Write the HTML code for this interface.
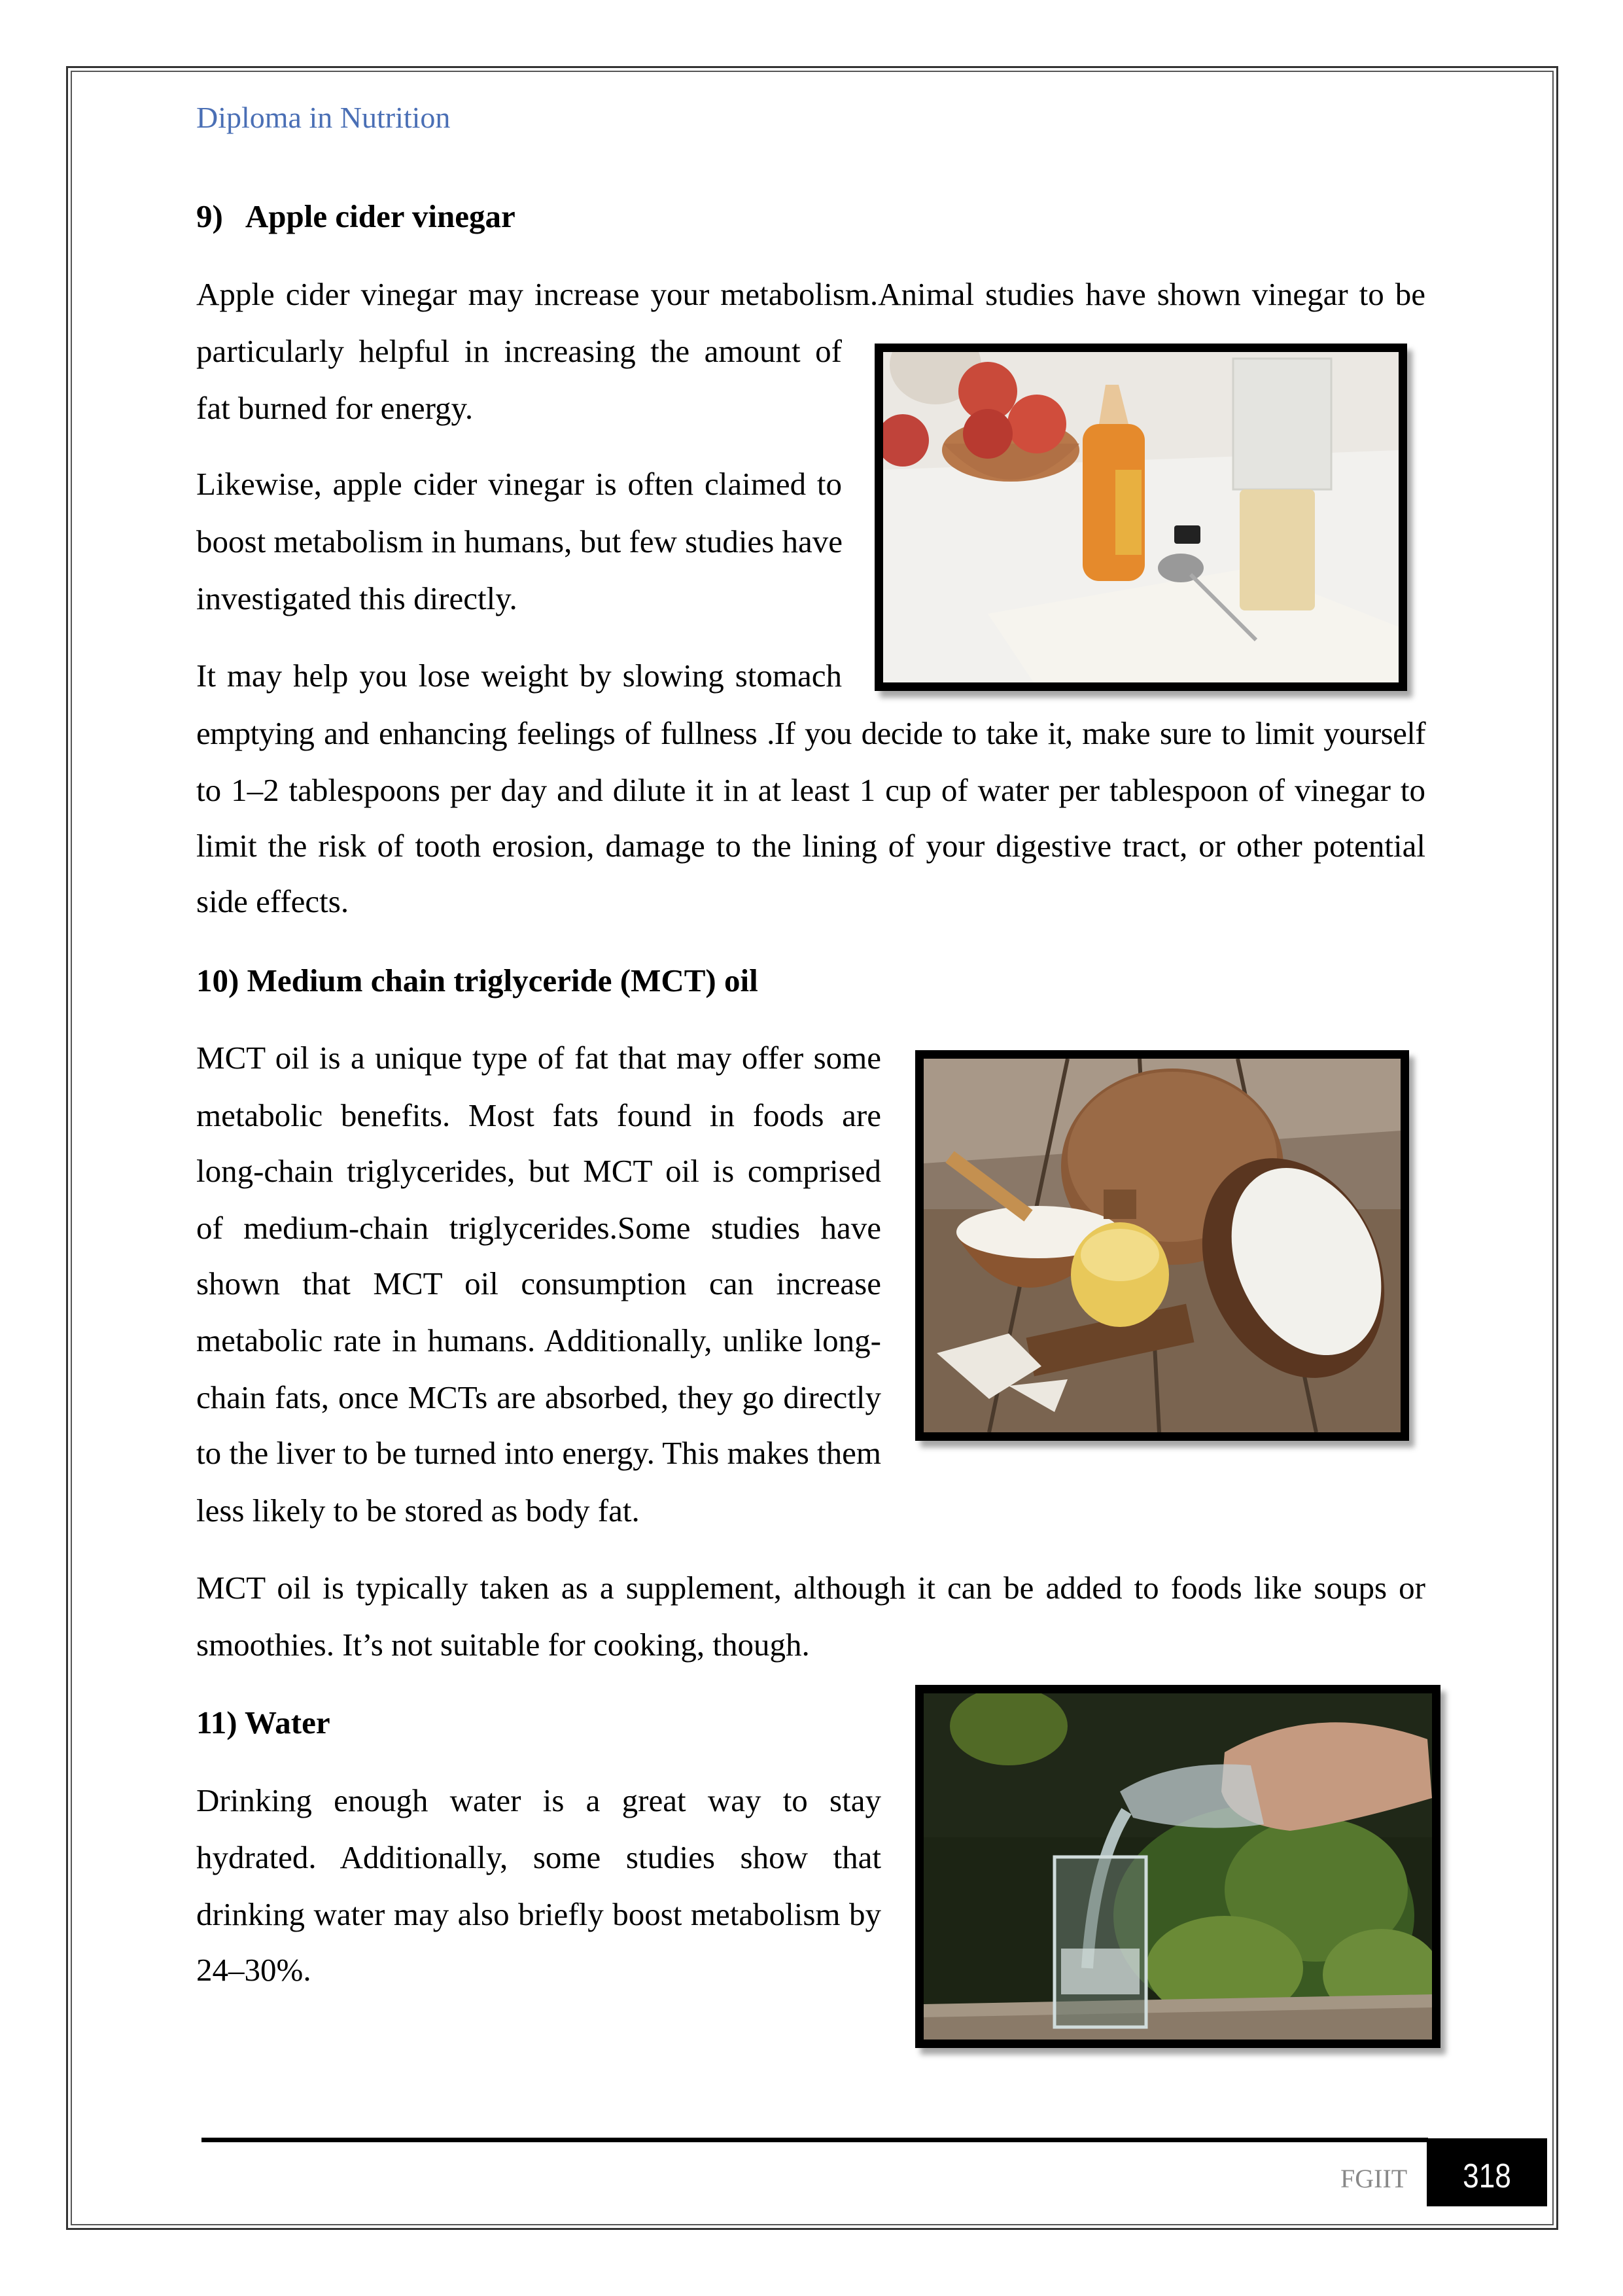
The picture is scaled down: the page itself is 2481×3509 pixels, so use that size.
<!DOCTYPE html>
<html><head><meta charset="utf-8">
<style>
*{margin:0;padding:0;box-sizing:border-box}
html,body{width:2481px;height:3509px;background:#fff;overflow:hidden}
body{position:relative;font-family:"Liberation Serif",serif;color:#000}
.b1{position:absolute;left:101px;top:101px;width:2281px;height:3307px;border:3px solid #333}
.b2{position:absolute;left:108px;top:108px;width:2267px;height:3293px;border:2px solid #555}
.l{position:absolute;left:300px;height:70px;line-height:70px;font-size:49px;white-space:nowrap;text-align:justify;text-align-last:justify}
.l.e{text-align-last:left}
.w1{width:1879px}.w2{width:987px}.w3{width:1047px}
.h{font-weight:bold}
.img{position:absolute;border:13px solid #000;box-shadow:8px 10px 8px rgba(0,0,0,.35);overflow:hidden}
</style></head><body>
<div class="b1"></div><div class="b2"></div>
<div style="position:absolute;left:300px;top:150px;font-size:46px;line-height:60px;color:#4a6fb5">Diploma in Nutrition</div>

<div class="l h e" style="top:296px">9)&nbsp;&nbsp; Apple cider vinegar</div>
<div class="l w1" style="top:415px">Apple cider vinegar may increase your metabolism.Animal studies have shown vinegar to be</div>
<div class="l w2" style="top:502px">particularly helpful in increasing the amount of</div>
<div class="l e" style="top:589px">fat burned for energy.</div>
<div class="l w2" style="top:705px">Likewise, apple cider vinegar is often claimed to</div>
<div class="l w2" style="top:793px">boost metabolism in humans, but few studies have</div>
<div class="l e" style="top:880px">investigated this directly.</div>
<div class="l w2" style="top:998px">It may help you lose weight by slowing stomach</div>
<div class="l w1" style="top:1086px;letter-spacing:-0.6px;word-spacing:-2px">emptying and enhancing feelings of fullness .If you decide to take it, make sure to limit yourself</div>
<div class="l w1" style="top:1173px">to 1–2 tablespoons per day and dilute it in at least 1 cup of water per tablespoon of vinegar to</div>
<div class="l w1" style="top:1258px">limit the risk of tooth erosion, damage to the lining of your digestive tract, or other potential</div>
<div class="l e" style="top:1343px">side effects.</div>

<div class="l h e" style="top:1464px">10) Medium chain triglyceride (MCT) oil</div>
<div class="l w3" style="top:1582px">MCT oil is a unique type of fat that may offer some</div>
<div class="l w3" style="top:1670px">metabolic benefits. Most fats found in foods are</div>
<div class="l w3" style="top:1755px">long-chain triglycerides, but MCT oil is comprised</div>
<div class="l w3" style="top:1842px">of medium-chain triglycerides.Some studies have</div>
<div class="l w3" style="top:1927px">shown that MCT oil consumption can increase</div>
<div class="l w3" style="top:2014px">metabolic rate in humans. Additionally, unlike long-</div>
<div class="l w3" style="top:2101px">chain fats, once MCTs are absorbed, they go directly</div>
<div class="l w3" style="top:2186px">to the liver to be turned into energy. This makes them</div>
<div class="l e" style="top:2274px">less likely to be stored as body fat.</div>
<div class="l w1" style="top:2392px">MCT oil is typically taken as a supplement, although it can be added to foods like soups or</div>
<div class="l e" style="top:2479px">smoothies. It’s not suitable for cooking, though.</div>

<div class="l h e" style="top:2598px">11) Water</div>
<div class="l w3" style="top:2717px">Drinking enough water is a great way to stay</div>
<div class="l w3" style="top:2804px">hydrated. Additionally, some studies show that</div>
<div class="l w3" style="top:2891px">drinking water may also briefly boost metabolism by</div>
<div class="l e" style="top:2976px">24–30%.</div>

<!-- image 1 -->
<div class="img" style="left:1337px;top:525px;width:814px;height:531px;background:#ebe8e3">
<svg width="788" height="505" viewBox="0 0 788 505">
<rect x="0" y="0" width="788" height="505" fill="#ebe8e3"/>
<path d="M0 180 L788 150 L788 505 L0 505Z" fill="#f2f1ee"/>
<path d="M160 400 L560 330 L788 420 L788 505 L230 505Z" fill="#f6f4ee"/>
<ellipse cx="80" cy="20" rx="70" ry="60" fill="#dcd5cb"/>
<ellipse cx="195" cy="150" rx="105" ry="48" fill="#b8784a"/>
<path d="M92 140 Q195 250 300 140Z" fill="#b07045"/>
<circle cx="160" cy="60" r="45" fill="#c94a3a"/>
<circle cx="235" cy="110" r="45" fill="#d04d3c"/>
<circle cx="160" cy="125" r="38" fill="#b83a30"/>
<circle cx="30" cy="135" r="40" fill="#c0433a"/>
<rect x="305" y="110" width="95" height="240" rx="25" fill="#e58a2c"/>
<path d="M330 110 L340 50 L360 50 L375 110Z" fill="#e9c79a"/>
<rect x="355" y="180" width="40" height="130" fill="#e8b040"/>
<rect x="535" y="10" width="150" height="200" fill="#e4e4e0" stroke="#d2d2cc" stroke-width="3"/>
<rect x="545" y="210" width="115" height="185" rx="8" fill="#e8d6a8"/>
<rect x="445" y="265" width="40" height="28" rx="4" fill="#222"/>
<ellipse cx="455" cy="330" rx="35" ry="22" fill="#999"/>
<path d="M470 340 L570 440" stroke="#aaa" stroke-width="6"/>
</svg></div>

<!-- image 2 -->
<div class="img" style="left:1399px;top:1605px;width:755px;height:597px;background:#6b5540">
<svg width="729" height="571" viewBox="0 0 729 571">
<rect width="729" height="571" fill="#7a6450"/>
<rect y="0" width="729" height="230" fill="#8a7868"/>
<path d="M0 0 L729 0 L729 110 L0 160Z" fill="#a89888"/>
<path d="M100 571 L220 0 M360 571 L330 0 M600 571 L480 0" stroke="#4a3a2c" stroke-width="6"/>
<ellipse cx="380" cy="165" rx="170" ry="150" fill="#8a5a38"/>
<ellipse cx="380" cy="150" rx="160" ry="130" fill="#9a6a46"/>
<path d="M50 270 Q150 430 300 270Z" fill="#8a5530"/>
<ellipse cx="175" cy="265" rx="125" ry="40" fill="#f4f1ea"/>
<path d="M40 150 L160 240" stroke="#c49050" stroke-width="22"/>
<ellipse cx="565" cy="320" rx="130" ry="175" fill="#5a3620" transform="rotate(-25 565 320)"/>
<ellipse cx="585" cy="310" rx="105" ry="150" fill="#f2f1ec" transform="rotate(-25 585 310)"/>
<rect x="160" y="400" width="250" height="60" fill="#6a4428" transform="rotate(-12 285 430)"/>
<ellipse cx="300" cy="330" rx="75" ry="80" fill="#e8c85a"/>
<ellipse cx="300" cy="300" rx="60" ry="40" fill="#f2dc88"/>
<rect x="275" y="200" width="50" height="45" fill="#7a5030"/>
<path d="M20 450 L130 420 L180 470 L100 520Z M130 500 L220 490 L200 540Z" fill="#ece8e0"/>
</svg></div>

<!-- image 3 -->
<div class="img" style="left:1399px;top:2575px;width:803px;height:555px;background:#1a2010">
<svg width="777" height="529" viewBox="0 0 777 529">
<rect width="777" height="529" fill="#1c2414"/>
<rect width="777" height="220" fill="#202818"/>
<ellipse cx="130" cy="50" rx="90" ry="60" fill="#5e7a2a" opacity=".8"/>
<ellipse cx="520" cy="340" rx="230" ry="170" fill="#3a5a22"/>
<ellipse cx="600" cy="300" rx="140" ry="110" fill="#56782e"/>
<ellipse cx="460" cy="420" rx="120" ry="80" fill="#6a8a36"/>
<ellipse cx="700" cy="430" rx="90" ry="70" fill="#6c8c3a"/>
<rect x="0" y="475" width="777" height="54" fill="#8a7a68"/>
<path d="M0 475 L777 460 L777 480 L0 495Z" fill="#a49684"/>
<path d="M460 90 Q600 10 770 70 L777 160 Q640 200 560 210 Q470 200 455 150Z" fill="#c59a80"/>
<path d="M300 150 Q380 100 500 110 L520 200 Q420 215 320 190Z" fill="#c0ccd0" opacity=".75"/>
<path d="M310 180 Q260 260 250 420" stroke="#d6e6ea" stroke-width="18" fill="none" opacity=".8"/>
<rect x="200" y="250" width="140" height="260" fill="#6a7a70" opacity=".55"/>
<rect x="210" y="390" width="120" height="70" fill="#dce6e4" opacity=".7"/>
<rect x="200" y="250" width="140" height="260" fill="none" stroke="#d0dcdc" stroke-width="5"/>
</svg></div>

<!-- footer -->
<div style="position:absolute;left:308px;top:3267px;width:1875px;height:7px;background:#000"></div>
<div style="position:absolute;left:2181px;top:3268px;width:184px;height:104px;background:#000"></div>
<div style="position:absolute;left:2049px;top:3305px;font-size:40px;line-height:50px;color:#888">FGIIT</div>
<div style="position:absolute;left:2181px;top:3296px;width:184px;text-align:center;font-family:'Liberation Sans',sans-serif;font-size:52px;line-height:60px;color:#fff;transform:scaleX(.85)">318</div>
</body></html>
